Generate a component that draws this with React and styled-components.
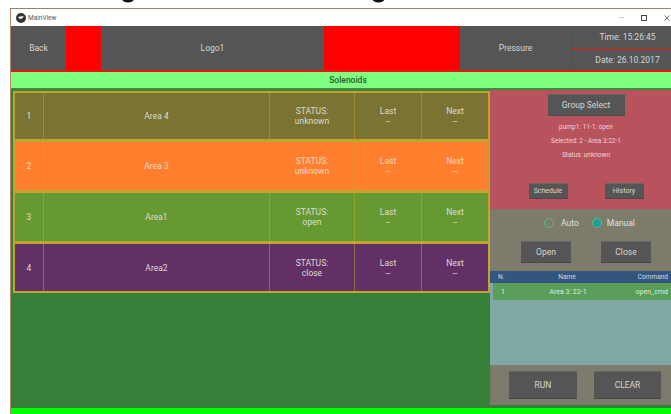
import React from "react";
import styled, { createGlobalStyle } from "styled-components";

const GlobalStyle = createGlobalStyle`
  html, body {
    margin: 0;
    padding: 0;
    background: #fff;
    overflow: hidden;
  }
  body {
    font-family: Roboto, "Liberation Sans", sans-serif;
  }
`;

const Page = styled.div`
  width: 671px;
  height: 414px;
  overflow: hidden;
  background: #fff;
`;

const Backdrop = styled.svg`
  display: block;
  width: 671px;
  height: 8px;
`;

const Window = styled.div`
  margin-left: 10px;
  height: 406px;
  display: flex;
  flex-direction: column;
  border-top: 1px solid #9a7f72;
  border-left: 1px solid #b08a68;
`;

const TitleBar = styled.div`
  height: 17px;
  display: flex;
  align-items: center;
  padding-left: 5px;
  gap: 2px;
  background: #fff;
  font-size: 6.5px;
  color: #555;
`;

const WindowControls = styled.div`
  margin-left: auto;
  display: flex;
  align-items: center;
  gap: 17px;
  margin-right: -4px;
  width: 56px;
`;

const Header = styled.div`
  height: 44px;
  display: grid;
  grid-template-columns: 55px 35px 223px 136px 111px 1fr;
  border-bottom: 2px solid #f01010;
  box-sizing: content-box;
  flex: none;
`;

const HeaderCell = styled.div`
  display: flex;
  align-items: center;
  justify-content: center;
  background: ${(p) => (p.$red ? "#ff0000" : "#555555")};
  color: #d6d6d6;
  font-size: 8.5px;
`;

const ClockCell = styled.div`
  display: grid;
  grid-template-rows: 22px 22px;
  border-left: 1px solid #d81818;
`;

const ClockLine = styled(HeaderCell)`
  padding-left: 12px;
  & + & {
    border-top: 1px solid #e81818;
  }
`;

const SectionBar = styled.div`
  height: 16px;
  flex: none;
  display: flex;
  align-items: center;
  justify-content: center;
  padding-left: 14px;
  background: #80ff80;
  border-bottom: 2px solid #3f8a42;
  color: #2a5a2c;
  font-size: 8.5px;
  font-weight: 500;
`;

const Body = styled.div`
  flex: none;
  height: 318px;
  display: grid;
  grid-template-columns: 479px 1fr;
  background: #37803a;
`;

const AreaList = styled.div`
  align-self: start;
  margin: 1px 0 0 2px;
  width: 477px;
  box-sizing: border-box;
  padding: 2px;
  display: grid;
  grid-template-rows: 46px 48px 48px 47px;
  gap: 3px;
  background: #bfa42e;
`;

const AreaRow = styled.div`
  display: grid;
  grid-template-columns: 28px 226px 85px 67px 1fr;
  background: ${(p) => p.$bg};
  color: ${(p) => p.$ink || "#dcdcd0"};
  font-size: 8.5px;
`;

const AreaCell = styled.div`
  display: flex;
  flex-direction: column;
  align-items: center;
  justify-content: center;
  line-height: 10px;
  & + & {
    border-left: 1px solid rgba(200, 168, 48, 0.5);
  }
`;

const Side = styled.div`
  display: flex;
  flex-direction: column;
  height: 315px;
  color: #e0e0d8;
`;

const SelectPanel = styled.div`
  height: 119px;
  flex: none;
  background: #b8525c;
  display: flex;
  flex-direction: column;
  align-items: center;
  padding: 4px 0 0 11px;
  box-sizing: border-box;
`;

const GreyButton = styled.button`
  width: ${(p) => p.$w}px;
  height: ${(p) => p.$h}px;
  flex: none;
  padding: 0;
  border: none;
  border-top: 1px solid #666;
  border-bottom: 1px solid #4a4a4a;
  background: #555555;
  color: #d6d6d6;
  font-family: inherit;
  font-size: ${(p) => p.$size || 8.5}px;
`;

const InfoLines = styled.div`
  margin-top: 4px;
  display: flex;
  flex-direction: column;
  align-items: center;
  font-size: 6.5px;
  line-height: 14px;
  color: #f0d4d4;
`;

const ButtonRow = styled.div`
  display: flex;
  justify-content: center;
  gap: ${(p) => p.$gap}px;
  margin-top: ${(p) => p.$top || 0}px;
`;

const ModePanel = styled.div`
  height: 62px;
  flex: none;
  background: #7d7b6b;
  padding: 9px 0 0 11px;
  box-sizing: border-box;
`;

const RadioRow = styled.div`
  display: flex;
  align-items: center;
  height: 10px;
  padding-left: 43px;
  font-size: 8.5px;
  color: #e2e2da;
`;

const Radio = styled.span`
  width: 10px;
  height: 10px;
  box-sizing: border-box;
  border-radius: 50%;
  border: 1px solid #5fb98a;
  background: ${(p) => (p.$on ? "#1f9f8f" : "transparent")};
  margin-right: ${(p) => p.$gap}px;
`;

const RadioLabel = styled.span`
  margin-right: ${(p) => p.$gap || 0}px;
`;

const QueuePanel = styled.div`
  flex: 1;
  background: #80a8a5;
  display: flex;
  flex-direction: column;
`;

const QueueHead = styled.div`
  height: 12px;
  display: grid;
  grid-template-columns: 21px 96px 1fr;
  align-items: center;
  background: #33567f;
  color: #cfd8e2;
  font-size: 6.5px;
  padding: 0 3px 0 8px;
`;

const QueueRow = styled.div`
  height: 17px;
  margin-left: 3px;
  display: grid;
  grid-template-columns: 19px 96px 1fr;
  align-items: center;
  background: #5a9e5a;
  color: #dcecdc;
  font-size: 7px;
  padding: 0 3px 0 8px;
`;

const QueueName = styled.span`
  text-align: center;
`;

const QueueCommand = styled.span`
  text-align: right;
`;

const RunPanel = styled.div`
  height: 40px;
  flex: none;
  background: #7d7b6b;
  display: flex;
  justify-content: center;
  align-items: center;
  gap: 17px;
  padding-left: 9px;
`;

const Footer = styled.div`
  flex: 1;
  background: #00ff00;
`;

const areas = [
  { n: 1, name: "Area 4", status: "unknown", bg: "#7a7332" },
  { n: 2, name: "Area 3", status: "unknown", bg: "#ff7f2f", ink: "#f3d8c0" },
  { n: 3, name: "Area1", status: "open", bg: "#679933" },
  { n: 4, name: "Area2", status: "close", bg: "#633065" },
];

const AppIcon = () => (
  <svg width="10" height="10" viewBox="0 0 10 10">
    <circle cx="5" cy="5" r="5" fill="#333" />
    <path d="M2 4.2 C3.5 3 6 3 8 3.6 C6.8 4.4 6.8 5.6 5 6 C3.8 6 2.8 5.2 2 4.2Z" fill="#eee" />
  </svg>
);

export default function App() {
  return (
    <Page>
      <GlobalStyle />
      <Backdrop viewBox="0 0 671 8">
        <ellipse cx="128" cy="-1" rx="6" ry="3.5" fill="#111" />
        <ellipse cx="378.5" cy="-1" rx="6" ry="3.5" fill="#111" />
      </Backdrop>
      <Window>
        <TitleBar>
          <AppIcon />
          <span>MainView</span>
          <WindowControls>
            <svg width="5" height="5" viewBox="0 0 5 5">
              <path d="M0 2.5H5" stroke="#ccc" />
            </svg>
            <svg width="6" height="6" viewBox="0 0 6 6">
              <rect x="0.5" y="0.5" width="5" height="5" fill="none" stroke="#444" />
            </svg>
            <svg width="6" height="6" viewBox="0 0 6 6">
              <path d="M0.5 0.5L5.5 5.5M5.5 0.5L0.5 5.5" stroke="#777" />
            </svg>
          </WindowControls>
        </TitleBar>
        <Header>
          <HeaderCell>Back</HeaderCell>
          <HeaderCell $red />
          <HeaderCell>Logo1</HeaderCell>
          <HeaderCell $red />
          <HeaderCell>Pressure</HeaderCell>
          <ClockCell>
            <ClockLine>Time: 15:26:45</ClockLine>
            <ClockLine>Date: 26.10.2017</ClockLine>
          </ClockCell>
        </Header>
        <SectionBar>Solenoids</SectionBar>
        <Body>
          <AreaList>
            {areas.map((a) => (
              <AreaRow key={a.n} $bg={a.bg} $ink={a.ink}>
                <AreaCell>{a.n}</AreaCell>
                <AreaCell>{a.name}</AreaCell>
                <AreaCell>
                  <span>STATUS:</span>
                  <span>{a.status}</span>
                </AreaCell>
                <AreaCell>
                  <span>Last</span>
                  <span>--</span>
                </AreaCell>
                <AreaCell>
                  <span>Next</span>
                  <span>--</span>
                </AreaCell>
              </AreaRow>
            ))}
          </AreaList>
          <Side>
            <SelectPanel>
              <GreyButton $w={77} $h={22}>Group Select</GreyButton>
              <InfoLines>
                <span>pump1: 11-1: open</span>
                <span>Selected: 2 - Area 3:22-1</span>
                <span>Status: unknown</span>
              </InfoLines>
              <ButtonRow $gap={37} $top={21}>
                <GreyButton $w={39} $h={16} $size={7}>Schedule</GreyButton>
                <GreyButton $w={39} $h={16} $size={7}>History</GreyButton>
              </ButtonRow>
            </SelectPanel>
            <ModePanel>
              <RadioRow>
                <Radio $gap={7} />
                <RadioLabel $gap={13}>Auto</RadioLabel>
                <Radio $on $gap={5} />
                <RadioLabel>Manual</RadioLabel>
              </RadioRow>
              <ButtonRow $gap={30} $top={13}>
                <GreyButton $w={50} $h={22}>Open</GreyButton>
                <GreyButton $w={50} $h={22}>Close</GreyButton>
              </ButtonRow>
            </ModePanel>
            <QueuePanel>
              <QueueHead>
                <span>N.</span>
                <QueueName>Name</QueueName>
                <QueueCommand>Command</QueueCommand>
              </QueueHead>
              <QueueRow>
                <span>1</span>
                <QueueName>Area 3: 22-1</QueueName>
                <QueueCommand>open_cmd</QueueCommand>
              </QueueRow>
            </QueuePanel>
            <RunPanel>
              <GreyButton $w={68} $h={28}>RUN</GreyButton>
              <GreyButton $w={67} $h={28}>CLEAR</GreyButton>
            </RunPanel>
          </Side>
        </Body>
        <Footer />
      </Window>
    </Page>
  );
}
